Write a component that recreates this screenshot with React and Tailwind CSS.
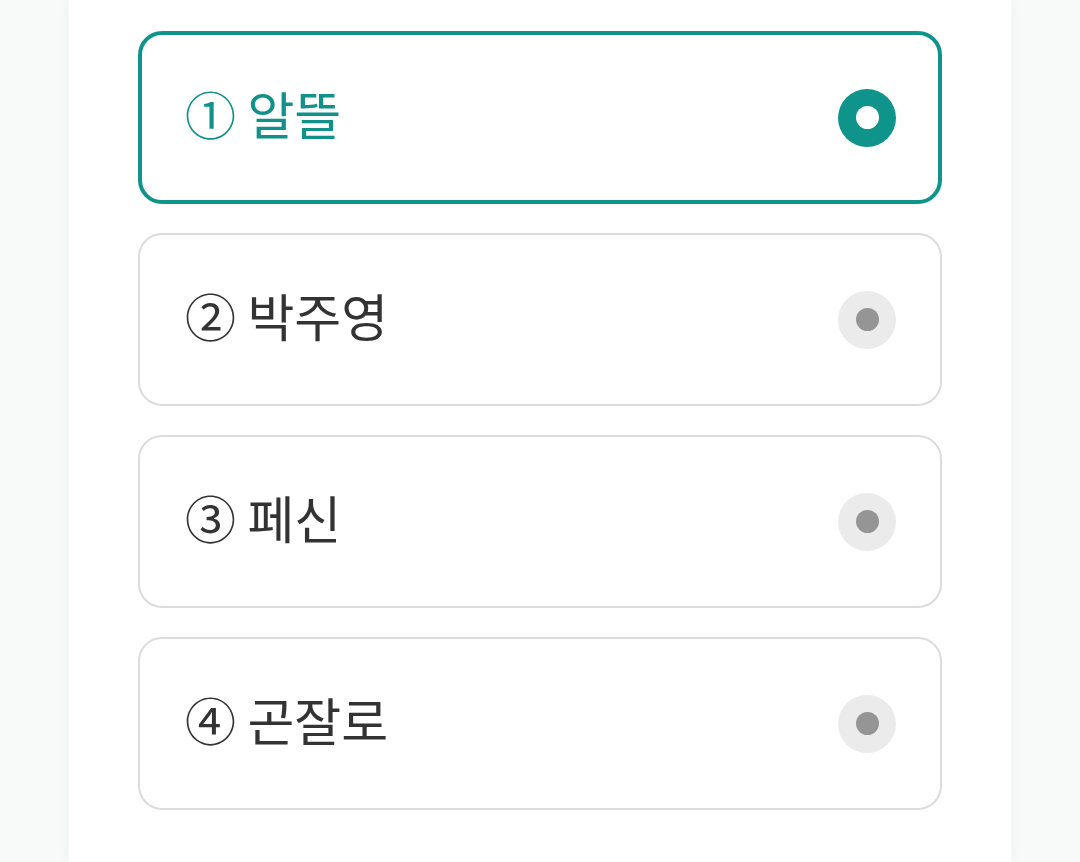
const options = [
    { id: 1, mark: "①", name: "알뜰" },
    { id: 2, mark: "②", name: "박주영" },
    { id: 3, mark: "③", name: "페신" },
    { id: 4, mark: "④", name: "곤잘로" },
];

function Radio({ checked }) {
    return checked ? (
        <span className="w-[58px] h-[58px] rounded-full bg-[#0f948c] flex items-center justify-center flex-shrink-0">
            <span className="w-[23px] h-[23px] rounded-full bg-white" />
        </span>
    ) : (
        <span className="w-[58px] h-[58px] rounded-full bg-[#ebebeb] flex items-center justify-center flex-shrink-0">
            <span className="w-[23px] h-[23px] rounded-full bg-[#959595]" />
        </span>
    );
}

export default function App() {
    const selected = 1;

    return (
        <div
            className="min-h-[862px] bg-[#f8faf9] flex justify-center"
            style={{ fontFamily: '"Noto Sans CJK KR", "Noto Sans", sans-serif' }}
        >
            <div className="w-[942px] min-h-[862px] bg-white shadow-[0_0_16px_rgba(0,0,0,0.03)] px-[69px] pt-[31px] flex flex-col gap-[29px]">
                {options.map((opt) => {
                    const isOn = opt.id === selected;
                    return (
                        <div
                            key={opt.id}
                            className={`h-[173px] rounded-[24px] bg-white flex items-center justify-between ${
                                isOn ? "border-[4px] border-[#0f948c] pl-[43px] pr-[42px]" : "border-2 border-[#dcdcdc] pl-[45px] pr-[44px]"
                            }`}
                        >
                            <span
                                className={`text-[51px] leading-none mb-[8px] ${isOn ? "text-[#12918a]" : "text-[#333333]"}`}
                            >
                                {opt.mark} {opt.name}
                            </span>
                            <Radio checked={isOn} />
                        </div>
                    );
                })}
            </div>
        </div>
    );
}
